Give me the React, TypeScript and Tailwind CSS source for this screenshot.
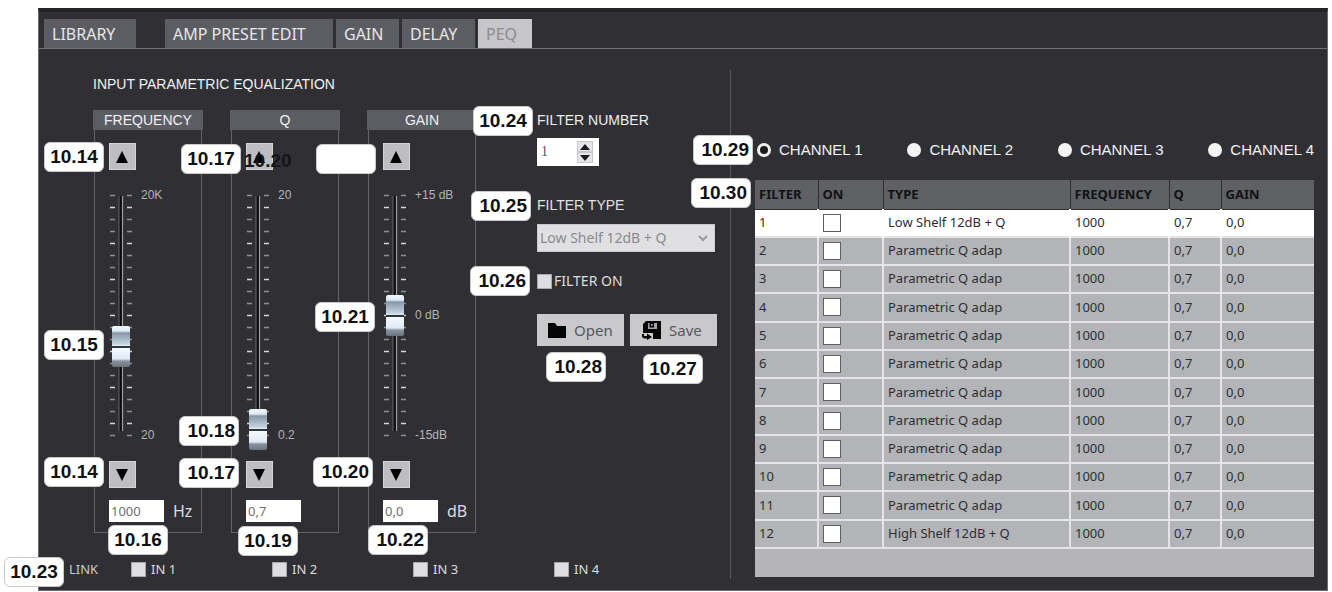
import { useState } from "react";
import clsx from "clsx";

const TABS = [
  { name: "LIBRARY", size: "w-[92px] mr-[29px]" },
  { name: "AMP PRESET EDIT", size: "w-[168px] mr-[3px]" },
  { name: "GAIN", size: "w-[63px] mr-[3px]" },
  { name: "DELAY", size: "w-[73px] mr-[3px]" },
  { name: "PEQ", size: "w-[54px]" },
];

// position is the thumb place along the fader, 0 (bottom) to 1000 (top)
const FADERS = [
  { name: "FREQUENCY", value: "1000", unit: "Hz", top: "20K", middle: "", bottom: "20", position: 370 },
  { name: "Q", value: "0,7", unit: "", top: "20", middle: "", bottom: "0.2", position: 27 },
  { name: "GAIN", value: "0,0", unit: "dB", top: "+15 dB", middle: "0 dB", bottom: "-15dB", position: 500 },
];

const FILTERS = Array.from({ length: 12 }, (_, i) => ({
  id: i + 1,
  type: i === 0 ? "Low Shelf 12dB + Q" : i === 11 ? "High Shelf 12dB + Q" : "Parametric Q adap",
}));

const CALLOUTS = [
  { label: "10.14", place: "left-[44px] top-[142px] justify-center" },
  { label: "10.17", place: "left-[181px] top-[144px] justify-center" },
  { label: "", place: "left-[316px] top-[144px]" },
  { label: "10.15", place: "left-[44px] top-[330px] justify-center" },
  { label: "10.18", place: "left-[179px] top-[416px] justify-end" },
  { label: "10.14", place: "left-[44px] top-[457px] justify-center" },
  { label: "10.17", place: "left-[179px] top-[458px] justify-end" },
  { label: "10.20", place: "left-[313px] top-[457px] justify-end" },
  { label: "10.21", place: "left-[315px] top-[302px] justify-center" },
  { label: "10.16", place: "left-[108px] top-[525px] justify-center" },
  { label: "10.19", place: "left-[238px] top-[526px] justify-center" },
  { label: "10.22", place: "left-[368px] top-[525px] justify-end" },
  { label: "10.23", place: "left-[4px] top-[557px] justify-center" },
  { label: "10.24", place: "left-[473px] top-[106px] justify-center" },
  { label: "10.25", place: "left-[471px] top-[191px] justify-end" },
  { label: "10.26", place: "left-[470px] top-[266px] justify-end" },
  { label: "10.28", place: "left-[546px] top-[352px] justify-end" },
  { label: "10.27", place: "left-[643px] top-[354px] justify-center" },
  { label: "10.29", place: "left-[693px] top-[135px] justify-end" },
  { label: "10.30", place: "left-[691px] top-[178px] justify-end" },
];

const tahoma = "font-['Noto_Sans','DejaVu_Sans',sans-serif]";

function StepButton({ up, label }: { up?: boolean; label: string }) {
  return (
    <button
      type="button"
      aria-label={label}
      className="flex h-[27px] w-[27px] items-center justify-center border border-[#d4d4d8] bg-[#bdbdc2]"
    >
      <svg width="14" height="12" viewBox="0 0 15 13" className="mr-0.5">
        <path d={up ? "M7.5 0 L14 13 H1 Z" : "M1 0 H14 L7.5 13 Z"} fill="#050505" />
      </svg>
    </button>
  );
}

function Scale() {
  return (
    <svg width="24" height="282" viewBox="0 0 24 282" className="[grid-area:1/1]">
      {Array.from({ length: 21 }, (_, i) => (
        <path
          key={i}
          d={`M1 ${21.5 + i * 12} h5 M18 ${21.5 + i * 12} h5`}
          stroke={i % 3 === 1 ? "#d6d6da" : "#8e8e92"}
          strokeWidth="1.5"
        />
      ))}
      <path d="M11.5 22 V257" stroke="#0c0c0e" strokeWidth="3" />
      <path d="M13.5 22 V257" stroke="#a0a0a4" strokeWidth="1.2" />
      <path d="M10 22 V257" stroke="#66666a" strokeWidth="1" />
    </svg>
  );
}

function Fader({ fader }: { fader: (typeof FADERS)[number] }) {
  const [position, setPosition] = useState(fader.position);
  const [value, setValue] = useState(fader.value);

  return (
    <section className="flex w-[110px] flex-col">
      <h2 className="h-5 bg-[#5c5d62] text-center text-sm leading-5 text-[#f0f0f2]">{fader.name}</h2>
      <div className="mx-px border-x border-b border-[#646468] pl-[14px] pt-[13px] pb-[10px]">
        <StepButton up label={`${fader.name} up`} />
        <div className="mt-1 mb-[5px] flex h-[282px]">
          <div className="grid w-6 justify-items-center">
            <Scale />
            <input
              type="range"
              aria-label={fader.name}
              min={0}
              max={1000}
              value={position}
              onChange={(e) => setPosition(Number(e.target.value))}
              className="h-[282px] w-[18px] appearance-none bg-transparent [direction:rtl] [grid-area:1/1] [writing-mode:vertical-lr] [&::-webkit-slider-thumb]:h-[41px] [&::-webkit-slider-thumb]:w-[18px] [&::-webkit-slider-thumb]:appearance-none [&::-webkit-slider-thumb]:rounded-xs [&::-webkit-slider-thumb]:bg-[linear-gradient(#eef8fc_0px,#dcebf3_5px,#8998a8_7px,#c3d3de_18px,#e4eef4_20px,#30373d_20px,#30373d_22px,#f4faff_22px,#dfe9f4_33px,#8994a0_35px,#6b747e_41px)]"
            />
          </div>
          <div className="ml-2 flex flex-1 flex-col justify-between py-3 text-xs leading-[18px] whitespace-nowrap text-[#b4b4b8]">
            <span>{fader.top}</span>
            <span>{fader.middle}</span>
            <span>{fader.bottom}</span>
          </div>
        </div>
        <StepButton label={`${fader.name} down`} />
        <div className="mt-3 flex items-center">
          <input
            type="text"
            aria-label={`${fader.name} value`}
            value={value}
            onChange={(e) => setValue(e.target.value)}
            className={`h-[22px] w-[55px] bg-white pl-0.5 text-[13px] text-[#707074] ${tahoma}`}
          />
          <span className={`ml-[9px] h-[22px] text-base leading-[22px] text-[#dcdcde] ${tahoma}`}>{fader.unit}</span>
        </div>
      </div>
    </section>
  );
}

function DarkCheckbox({ label, className }: { label: string; className?: string }) {
  return (
    <label className={clsx("flex items-center text-[#dcdcde]", tahoma, className)}>
      <input
        type="checkbox"
        className="h-[15px] w-[15px] shrink-0 appearance-none border border-[#a8a8ac] bg-[#dedee0] checked:bg-[#5c5d62]"
      />
      {label}
    </label>
  );
}

function FilterControls() {
  const [number, setNumber] = useState(1);
  const step = (by: number) => setNumber((n) => Math.min(12, Math.max(1, n + by)));

  return (
    <div className="ml-[60px] flex w-[180px] flex-col">
      <label htmlFor="filter-number" className="text-sm leading-5 text-[#ececee]">
        FILTER NUMBER
      </label>
      <div className="mt-2 flex h-7 w-[62px] items-center bg-white pr-1.5">
        <input
          id="filter-number"
          type="number"
          value={number}
          onChange={(e) => setNumber(Number(e.target.value))}
          className="w-full min-w-0 appearance-none pl-1 font-['Liberation_Serif',serif] text-sm text-[#505054] [&::-webkit-inner-spin-button]:appearance-none"
        />
        <div className="flex shrink-0 flex-col">
          {[1, -1].map((by) => (
            <button
              key={by}
              type="button"
              aria-label={by > 0 ? "Next filter" : "Previous filter"}
              onClick={() => step(by)}
              className="flex h-[11px] w-4 items-center justify-center border border-[#c8c8cc] bg-[#e6e6e8]"
            >
              <svg width="10" height="6" viewBox="0 0 10 6">
                <path d={by > 0 ? "M5 0 L10 6 H0 Z" : "M0 0 H10 L5 6 Z"} fill="#1c1c1e" />
              </svg>
            </button>
          ))}
        </div>
      </div>

      <label htmlFor="filter-type" className="mt-[29px] text-sm leading-5 text-[#e0e0e2]">
        FILTER TYPE
      </label>
      <div className="mt-[9px] grid h-7 w-[178px] items-center">
        <select
          id="filter-type"
          disabled
          className={`h-7 w-full appearance-none border border-[#cacacd] bg-[#e0e0e3] pl-0.5 text-sm text-[#8a8a8e] opacity-100 [grid-area:1/1] ${tahoma}`}
        >
          <option>Low Shelf 12dB + Q</option>
          <option>Parametric Q adap</option>
          <option>High Shelf 12dB + Q</option>
        </select>
        <svg width="10" height="7" viewBox="0 0 10 7" className="pointer-events-none mr-[7px] justify-self-end [grid-area:1/1]">
          <path d="M1 1 L5 5 L9 1" fill="none" stroke="#9a9a9e" strokeWidth="2" />
        </svg>
      </div>

      <DarkCheckbox label="FILTER ON" className="mt-[19px] h-5 gap-0.5 text-sm" />

      <div className={`mt-[23px] flex gap-1.5 text-[15px] text-[#58585c] ${tahoma}`}>
        <button type="button" className="flex h-8 w-[87px] items-center bg-[#c9c9cc] pl-[11px]">
          <svg width="18" height="17" viewBox="0 0 18 17" className="mr-2">
            <path d="M0 1 H7 L9 4 H18 V16 H0 Z" fill="#060606" />
          </svg>
          Open
        </button>
        <button type="button" className="flex h-8 w-[87px] items-center bg-[#c9c9cc] pl-3">
          <svg width="19" height="19" viewBox="0 0 19 19" className="mr-2">
            <path d="M4 0 H19 V18 H11 V12 H1 V3 Z" fill="#060606" />
            <path d="M6 2 H15 V8 H6 Z" fill="#a4a4a8" />
            <path d="M7.5 2 H12 V6.5 H7.5 Z" fill="#060606" />
            <path d="M9 3 H10.5 V5 H9 Z" fill="#a4a4a8" />
            <path d="M0 13 H2 V15 H5 V12.5 L10 16 L5 19 V17.5 H2 L0 16 Z" fill="#060606" />
          </svg>
          Save
        </button>
      </div>
    </div>
  );
}

function ChannelPicker() {
  const [channel, setChannel] = useState(1);
  return (
    <div className="flex justify-between pl-0.5 text-[15px] leading-5 text-[#f2f2f4]">
      {[1, 2, 3, 4].map((n) => (
        <label key={n} className="flex items-center gap-2">
          <input
            type="radio"
            name="channel"
            checked={channel === n}
            onChange={() => setChannel(n)}
            className="h-[14px] w-[14px] appearance-none rounded-full bg-[#f4f4f4] checked:border-[3px] checked:border-[#f0f0ea] checked:bg-[#1c1c1e]"
          />
          CHANNEL {n}
        </label>
      ))}
    </div>
  );
}

function FilterTable() {
  const [on, setOn] = useState<number[]>([]);
  const toggle = (id: number) =>
    setOn((prev) => (prev.includes(id) ? prev.filter((x) => x !== id) : [...prev, id]));

  return (
    <div className="mt-5 bg-[#b5b5b9] pb-7">
      <table className={`h-[369px] w-full table-fixed border-collapse text-left text-[13px] text-[#2e2e32] ${tahoma}`}>
        <colgroup>
          <col className="w-[63px]" />
          <col className="w-[65px]" />
          <col className="w-[187px]" />
          <col className="w-[99px]" />
          <col className="w-[52px]" />
          <col />
        </colgroup>
        <thead className="bg-[#5e6064] text-[#121214]">
          <tr className="h-[29px] border-b border-[#303034] [&>th]:border-r [&>th]:border-[#303034] [&>th]:p-0 [&>th]:pl-1 [&>th]:font-bold [&>th:last-child]:border-r-0">
            <th>FILTER</th>
            <th>ON</th>
            <th>TYPE</th>
            <th>FREQUENCY</th>
            <th>Q</th>
            <th>GAIN</th>
          </tr>
        </thead>
        <tbody>
          {FILTERS.map((f) => (
            <tr
              key={f.id}
              className={clsx(
                "border-b-2 border-[#e4e4e6] [&>td]:border-r-2 [&>td]:border-[#e4e4e6] [&>td]:p-0 [&>td]:pl-1 [&>td:last-child]:border-r-0",
                f.id === 1 ? "bg-white [&>td]:border-white" : "bg-[#b3b4b7]",
              )}
            >
              <td>{f.id}</td>
              <td>
                <input
                  type="checkbox"
                  aria-label={`Filter ${f.id} on`}
                  checked={on.includes(f.id)}
                  onChange={() => toggle(f.id)}
                  className="block h-[18px] w-[18px] appearance-none border border-[#606064] bg-white checked:bg-[#606064]"
                />
              </td>
              <td>{f.type}</td>
              <td>1000</td>
              <td>0,7</td>
              <td>0,0</td>
            </tr>
          ))}
        </tbody>
      </table>
    </div>
  );
}

export default function App() {
  const [tab, setTab] = useState("PEQ");

  return (
    <div className="relative bg-white pt-2 pr-1 pb-px pl-[38px] font-['Liberation_Sans',Arial,sans-serif]">
      <main className="border border-t-4 border-[#6c6c70] border-t-[#242426] bg-[#303034]">
        <nav className={`flex border-b border-[#707074] pt-[7px] pl-[5px] text-base ${tahoma}`}>
          {TABS.map((t) => (
            <button
              key={t.name}
              type="button"
              onClick={() => setTab(t.name)}
              className={clsx(
                "h-[29px] pl-2 text-left whitespace-nowrap",
                t.size,
                tab === t.name ? "bg-[#c6c6ca] text-[#8c8c90]" : "bg-[#5c5d62] text-[#e6e6e8]",
              )}
            >
              {t.name}
            </button>
          ))}
        </nav>

        <div className="flex pt-[21px] pb-[11px]">
          <div className="w-[692px] shrink-0 border-r border-[#58585c] pl-[54px]">
            <h1 className="pt-1 text-sm leading-5 text-[#f0f0f2]">INPUT PARAMETRIC EQUALIZATION</h1>
            <div className="mt-4 flex">
              <div className="flex gap-[27px]">
                {FADERS.map((f) => (
                  <Fader key={f.name} fader={f} />
                ))}
              </div>
              <FilterControls />
            </div>
            <div className={`-ml-6 mt-[26px] flex text-[13px] leading-5 text-[#c8c8cc] ${tahoma}`}>
              <span className="w-[62px]">LINK</span>
              {[1, 2, 3, 4].map((n) => (
                <DarkCheckbox key={n} label={`IN ${n}`} className="w-[141px] gap-[5px] text-[13px]" />
              ))}
            </div>
          </div>

          <div className="min-w-0 flex-1 pt-[70px] pr-[13px] pl-6">
            <ChannelPicker />
            <FilterTable />
          </div>
        </div>
      </main>

      {CALLOUTS.map((c, i) => (
        <span
          key={i}
          className={clsx(
            "absolute flex h-[30px] w-[60px] items-center rounded-md border border-[#c8c8ca] bg-white px-[3px] text-[19px] font-bold text-[#111113]",
            c.place,
          )}
        >
          {c.label}
        </span>
      ))}
      <span className="absolute top-[147px] left-[244px] text-[19px] leading-7 font-bold text-[#151517]">10.20</span>
    </div>
  );
}
